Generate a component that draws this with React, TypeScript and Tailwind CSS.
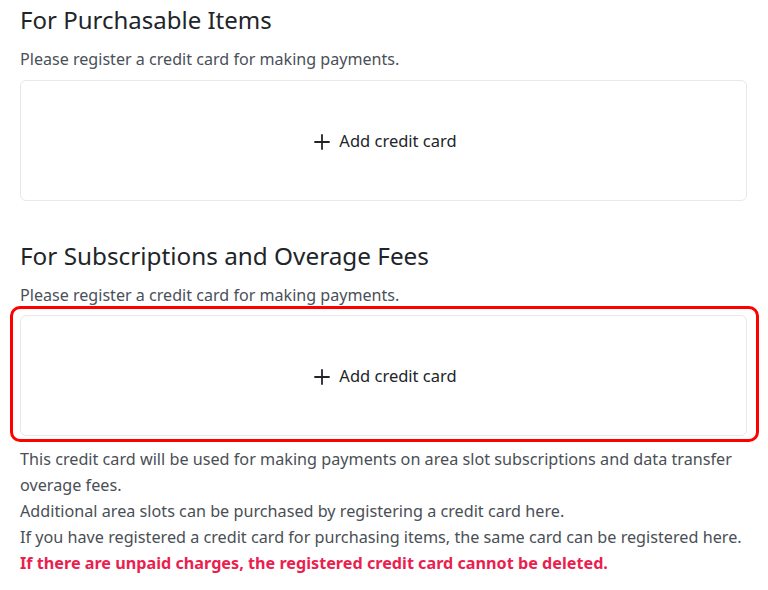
import { Plus } from 'lucide-react'

function AddCardBox() {
  return (
    <button
      type="button"
      className="flex h-[121px] w-full items-center justify-center gap-[5px] rounded-md border border-[#e6e8eb] bg-white pt-[2px] text-[16.5px] text-[#212529]"
    >
      <Plus className="h-6 w-6" strokeWidth={1.8} />
      <span>Add credit card</span>
    </button>
  )
}

export default function App() {
  return (
    <div
      className="min-h-[590px] bg-white pl-5 pr-[21px] text-[#212529]"
      style={{ fontFamily: '"Noto Sans", "Open Sans", sans-serif' }}
    >
      <section>
        <h2 className="text-[24px] leading-[40px] font-normal">For Purchasable Items</h2>
        <p className="mt-[7px] text-[16.1px] leading-[24px] text-[#4a5058]">
          Please register a credit card for making payments.
        </p>
        <div className="mt-[9px]">
          <AddCardBox />
        </div>
      </section>

      <section className="mt-[35px]">
        <h2 className="text-[24.3px] leading-[40px] font-normal">For Subscriptions and Overage Fees</h2>
        <p className="mt-[7px] text-[16.1px] leading-[24px] text-[#4a5058]">
          Please register a credit card for making payments.
        </p>
        <div className="relative mt-[8px]">
          <AddCardBox />
          {/* highlight annotation */}
          <div className="pointer-events-none absolute -top-[9px] -bottom-[6px] -left-[10px] -right-[12px] rounded-[10px] border-[3px] border-[#ff0000]" />
        </div>
        <div className="mt-[10px] text-[16.2px] leading-[26px] text-[#4a4f55]">
          <p>
            This credit card will be used for making payments on area slot subscriptions and data transfer
            overage fees.
          </p>
          <p>Additional area slots can be purchased by registering a credit card here.</p>
          <p>If you have registered a credit card for purchasing items, the same card can be registered here.</p>
          <p className="font-bold text-[#ea1f50]">
            If there are unpaid charges, the registered credit card cannot be deleted.
          </p>
        </div>
      </section>
    </div>
  )
}
